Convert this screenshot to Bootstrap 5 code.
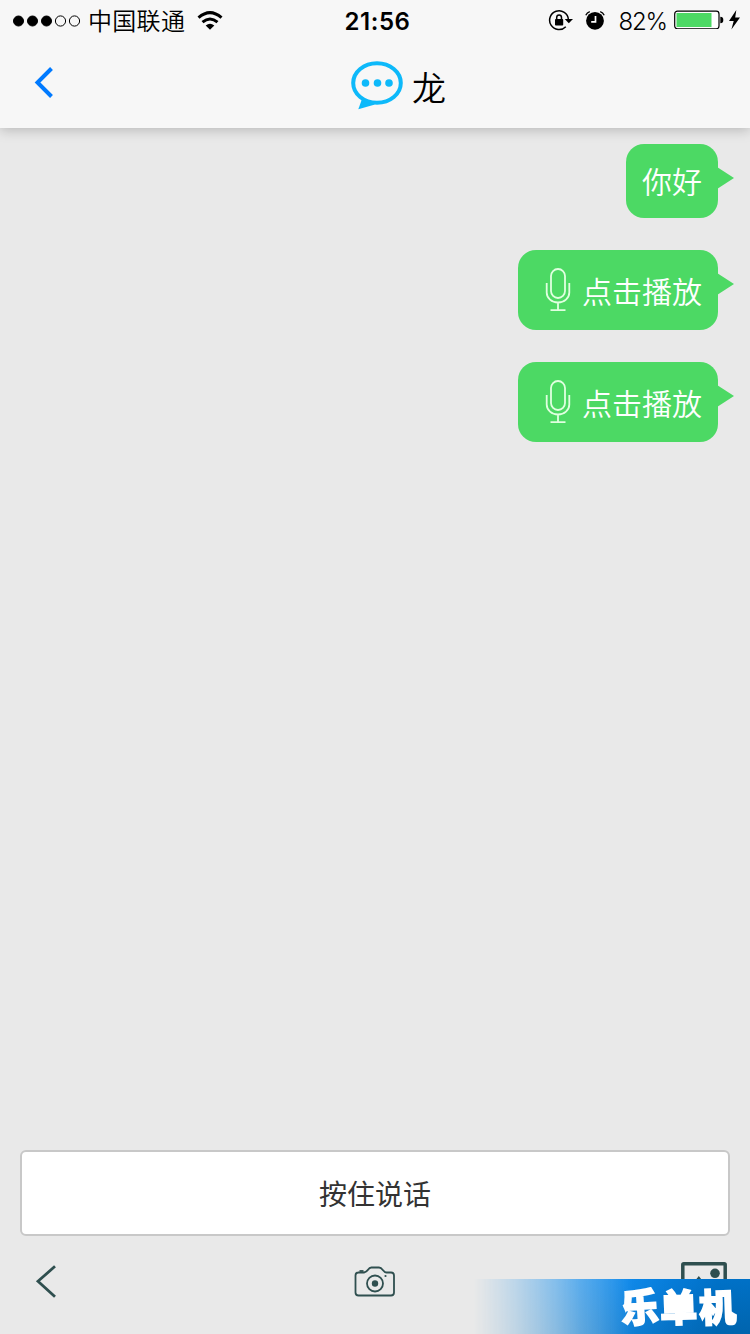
<!DOCTYPE html>
<html lang="zh-CN">
<head>
<meta charset="utf-8">
<meta name="viewport" content="width=device-width, initial-scale=1">
<title>龙</title>
<link rel="stylesheet" href="https://cdn.jsdelivr.net/npm/bootstrap@5.3.0/dist/css/bootstrap.min.css">
<style>
  body { font-family: Inter, "Noto Sans CJK SC", sans-serif; background: #e9e9e9; color: #000; }
  .screen { width: 750px; height: 1334px; }
  .app-header { height: 128px; background: #f7f7f7; box-shadow: 0 2px 12px rgba(0,0,0,.22); z-index: 2; }
  .status-bar { height: 41px; line-height: 41px; font-size: 24px; padding: 0 10px 0 12px; }
  .status-side { width: 300px; }
  .carrier { font: 350 24px/38px "Noto Sans CJK SC", sans-serif; letter-spacing: .3px; padding-bottom: 2px; margin-left: 7px; }
  .clock { font-weight: 600; font-size: 24px; letter-spacing: .55px; padding: 1px 0 0 3px; }
  .percent { font-size: 24px; font-weight: 350; letter-spacing: -1.1px; margin-left: 13px; padding-top: 1px; }
  .title-bar { height: 88px; }
  .title-mark { margin-left: 6px; }
  .contact { font: 350 34px/1 "Noto Sans CJK SC", sans-serif; margin-top: 4px; }
  .messages { padding: 16px 32px; gap: 32px; }
  .bubble { background: #4cd964; color: #fff; border-radius: 18px; padding: 0 16px 1px; font: 350 30px/1 "Noto Sans CJK SC", sans-serif; height: 80px; }
  .bubble::after { content: ""; position: absolute; left: calc(100% - 1px); top: 23px; border: solid transparent; border-width: 11px 0 11px 17px; border-left-color: #4cd964; }
  .bubble-short { height: 74px; padding-bottom: 3px; }
  .voice { width: 200px; }
  .talk { height: 86px; margin: 0 20px; border: 2px solid #c8c8c8; border-radius: 6px; background: #fff; color: #333; font: 400 28px/1 "Noto Sans CJK SC", sans-serif; }
  .tools { height: 98px; padding: 0 22px 6px 35px; }
  .ribbon { width: 276px; height: 55px; right: 0; bottom: 0; padding-right: 13px; background: linear-gradient(180deg, rgba(0,133,240,.35) 0, rgba(0,95,165,.25) 100%), linear-gradient(90deg, #aacfe8 0, #5dafed 36%, #178be6 56%, #0877cd 72%, #0067b3 88%, #0066b0 100%);
    -webkit-mask-image: linear-gradient(90deg, transparent 0, rgba(0,0,0,.25) 12%, rgba(0,0,0,.8) 38%, #000 58%); mask-image: linear-gradient(90deg, transparent 0, rgba(0,0,0,.25) 12%, rgba(0,0,0,.8) 38%, #000 58%);
    color: #fff; font: 900 39px/52px "Noto Sans CJK SC", sans-serif; -webkit-text-stroke: 1.8px #fff; }
  .ribbon span { display: inline-block; transform: rotate(-4deg) scale(.96,1); }
  .ribbon span + span { transform: rotate(-2deg) scale(.95,.98); }
</style>
</head>
<body>
<main class="screen d-flex flex-column position-relative overflow-hidden">
  <header class="app-header position-relative">
    <div class="status-bar d-flex justify-content-between align-items-center">
      <div class="status-side d-flex align-items-center">
        <svg width="69" height="14" viewBox="0 0 69 14"><g stroke="#000"><circle cx="6.5" cy="7" r="5"/><circle cx="20.5" cy="7" r="5"/><circle cx="34.5" cy="7" r="5"/><g fill="none"><circle cx="48.5" cy="7" r="5.1"/><circle cx="62.5" cy="7" r="5.1"/></g></g></svg>
        <span class="carrier">中国联通</span>
        <svg width="32" height="22" viewBox="0 0 32 22" fill="none" stroke="#000" stroke-width="3" style="margin-left:8px"><path d="M5.5 7.7Q17 -2.5 28.5 7.7M9.5 12.2Q17 5.8 24.5 12.2"/><path d="M12.7 15.5Q17 11.8 21.3 15.5L17 19.8Z" fill="#000" stroke="none"/></svg>
      </div>
      <span class="clock">21:56</span>
      <div class="status-side d-flex justify-content-end align-items-center">
        <svg width="26" height="24" viewBox="0 0 26 24" fill="none" stroke="#000" stroke-width="1.5"><path d="M18.8 17.7A9.4 9.4 0 1 1 21.4 10.5"/><path d="M17.7 10.1H26L21.8 14.3Z" fill="#000" stroke="none"/><rect x="8" y="10.1" width="8.2" height="6.4" rx=".8" fill="#000" stroke="none"/><path d="M9.7 10.5V8.5a2.4 2.6 0 0 1 4.8 0v2"/></svg>
        <svg width="20" height="20" viewBox="0 0 20 20" style="margin-left:12px"><circle cx="10" cy="9.8" r="8.9"/><path d="M.8 4.3Q2 1.5 4.8 .7M15.2 .7Q18 1.5 19.2 4.3" fill="none" stroke="#000" stroke-width="1.3"/><path d="M10.5 5v5.8H6.2" fill="none" stroke="#fff" stroke-width="1.7"/></svg>
        <span class="percent">82%</span>
        <svg class="mb-1" width="50" height="20" viewBox="0 0 50 20" style="margin-left:7px"><rect x=".7" y="2.2" width="44.3" height="17.6" rx="2.8" fill="#fff" stroke="#000" stroke-width="1.2"/><path d="M2.5 4H37.5V18H2.5Z" fill="#4cd964"/><path d="M46.3 7.8q3 0 3 3.2t-3 3.2Z"/></svg>
        <svg width="13" height="20" viewBox="0 0 13 20" style="margin:0 -1px 1px 4px"><path d="M8.3 0 1 11H5.7L3.4 19.4 12 7.6H7.2Z"/></svg>
      </div>
    </div>
    <div class="title-bar d-flex align-items-center justify-content-between px-4">
      <svg width="40" height="40" viewBox="0 0 40 40" fill="none" stroke="#007aff" stroke-width="4" class="mb-1"><path d="M27.5 5.5 13.5 19.5 27.5 33.5"/></svg>
      <div class="title-mark d-flex align-items-center">
        <svg width="54" height="50" viewBox="0 0 54 50"><path d="M12 39 8.3 49.3 25 44.5Z" fill="#0db9fa"/><ellipse cx="27" cy="23" rx="23.8" ry="19.8" fill="#f7f7f7" stroke="#0db9fa" stroke-width="4"/><g fill="#0db9fa"><circle cx="15.5" cy="23" r="3.8"/><circle cx="27.5" cy="23" r="3.8"/><circle cx="39" cy="23" r="3.8"/></g></svg>
        <h1 class="contact mb-0 ms-2">龙</h1>
      </div>
      <span></span>
    </div>
  </header>

  <section class="messages flex-grow-1 d-flex flex-column align-items-end">
    <div class="bubble bubble-short position-relative d-flex align-items-center">你好</div>
    <div class="bubble voice position-relative d-flex align-items-center justify-content-between">
      <svg class="ms-2 mt-1" width="32" height="48" viewBox="0 0 32 48" fill="none" stroke="#e0ffe0" stroke-width="1.8"><rect x="9" y="1" width="14" height="29" rx="7"/><path d="M4.7 15v9.5a11.3 10 0 0 0 22.6 0V15M16 34.5V42M8.5 42.2h15"/></svg>
      <span>点击播放</span>
    </div>
    <div class="bubble voice position-relative d-flex align-items-center justify-content-between">
      <svg class="ms-2 mt-1" width="32" height="48" viewBox="0 0 32 48" fill="none" stroke="#e0ffe0" stroke-width="1.8"><rect x="9" y="1" width="14" height="29" rx="7"/><path d="M4.7 15v9.5a11.3 10 0 0 0 22.6 0V15M16 34.5V42M8.5 42.2h15"/></svg>
      <span>点击播放</span>
    </div>
  </section>

  <footer>
    <div class="d-grid"><button class="talk" type="button">按住说话</button></div>
    <div class="tools d-flex align-items-center justify-content-between">
      <svg width="34" height="36" viewBox="0 0 34 36" fill="none" stroke="#2f4f4f" stroke-width="2.8"><path d="M20 2.3 3 17.3 20 32.8"/></svg>
      <svg width="42" height="32" viewBox="0 0 42 32" fill="none" stroke="#2f4f4f" stroke-width="1.8"><path d="M4 6.5H10Q12.5 6 14 3.7T17.5 1.5H25Q27 1.5 28.8 4T32.5 6.5H37Q40 6.5 40 9.5V26.5Q40 29.5 37 29.5H4.5Q1.5 29.5 1.5 26.5V9.5Q1.5 6.5 4.5 6.5Z"/><circle cx="21" cy="17.5" r="8"/><circle cx="21" cy="17.5" r="3.2" fill="#2f4f4f" stroke="none"/><path d="M5.5 5h4"/><circle cx="31.5" cy="10" r="1.1" fill="#2f4f4f" stroke="none"/></svg>
      <svg width="48" height="40" viewBox="0 0 48 40" fill="none" stroke="#2f4f4f" stroke-width="3.5"><rect x="2.8" y="1.8" width="42.4" height="34" rx="1"/><circle cx="35" cy="11.3" r="4.8" fill="#2f4f4f" stroke="none"/><path d="M6 32 18.8 16 28 28l6-5 8 9" stroke-width="2.5"/></svg>
    </div>
  </footer>
  <div class="ribbon position-absolute text-end"><span>乐</span><span>单</span><span>机</span></div>
</main>
<script src="https://cdn.jsdelivr.net/npm/bootstrap@5.3.0/dist/js/bootstrap.bundle.min.js"></script>
</body>
</html>
